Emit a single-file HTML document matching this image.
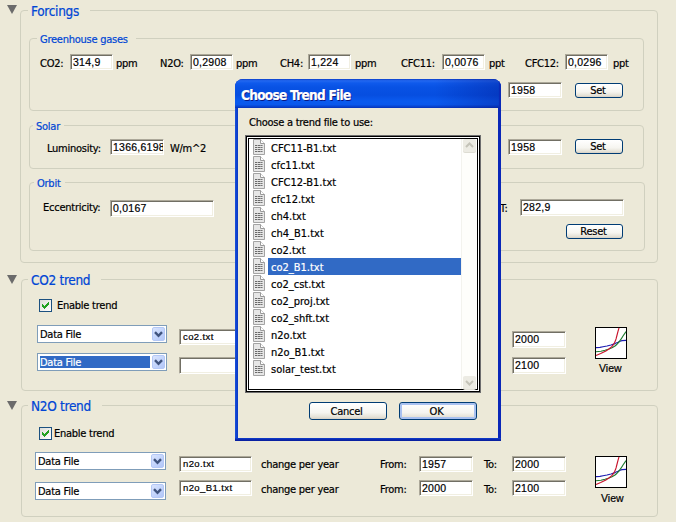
<!DOCTYPE html>
<html><head><meta charset="utf-8"><title>Choose Trend File</title>
<style>
html,body{margin:0;padding:0}
body{width:676px;height:522px;overflow:hidden;background:#ece9d8;position:relative;
 font-family:"DejaVu Sans Condensed","Liberation Sans",sans-serif;font-size:11px;color:#000;letter-spacing:-0.25px;-webkit-text-stroke:0.2px}
.a{position:absolute;white-space:nowrap}
.grp{position:absolute;border:1px solid #d0d0bf;border-radius:4px;box-sizing:border-box}
.gl{position:absolute;background:#ece9d8;color:#0046d5;white-space:nowrap;padding:0 8px 0 3px;line-height:14px;margin-top:1px}
.gl.big{font-size:13.5px;line-height:16px;letter-spacing:-0.3px;padding-right:11px}
.t{position:absolute;white-space:nowrap;line-height:14px;height:14px;margin-top:1px}
.in{position:absolute;box-sizing:border-box;background:#fff;border:1px solid;border-color:#aca899 #fff #fff #aca899;
 box-shadow:inset 1px 1px 0 #716f64, inset -1px -1px 0 #f1efe2;font-family:"Liberation Sans",sans-serif;font-size:10.5px;letter-spacing:0.25px;
 white-space:nowrap;overflow:hidden;padding:0 0 0 2px;line-height:15.5px}
.in.s{padding-left:3px;font-size:9.5px;letter-spacing:0.4px}
.btn{position:absolute;box-sizing:border-box;border:1px solid #003c74;border-radius:3px;text-align:center;
 background:linear-gradient(to bottom,#fff 0,#f6f5f0 60%,#e4e1d6 88%,#d6d0c5 100%);}
.cb{position:absolute;box-sizing:border-box;background:#fff;border:1px solid #7f9db9;height:18px}
.cb .tx{position:absolute;left:2px;top:2px;line-height:13.5px;height:12px;right:16px;padding-left:0}
.cb .ar{position:absolute;right:1px;top:1px;width:13px;height:14px;border-radius:2px;border:1px solid #b4c8f6;box-sizing:border-box;
 background:linear-gradient(135deg,#dae5fe 0,#c4d5fc 50%,#b2c6f7 100%)}
.cb .ar svg{position:absolute;left:1px;top:3px}
.chk{position:absolute;box-sizing:border-box;width:13px;height:13px;border:1px solid #1c5180;
 background:linear-gradient(135deg,#dcdcd7 0,#fff 100%)}
.tri{position:absolute;width:0;height:0;border-left:5px solid transparent;border-right:5px solid transparent;border-top:9px solid #6b6b6b}

.ico{position:absolute;left:595px;width:32px;height:32px;box-sizing:border-box;border:1px solid #000;background:#fff}
.ico svg{position:absolute;left:-1px;top:-1px}
.vw{position:absolute;font-family:"Liberation Sans",sans-serif;font-size:10.5px;letter-spacing:0;line-height:12px;white-space:nowrap}
#dlg{position:absolute;left:235px;top:79px;width:266px;height:362px;box-sizing:border-box;border-radius:8px 8px 0 0;
 background:#0a27b8;overflow:hidden}
#dlg .tb{position:absolute;left:0;top:0;width:266px;height:29px;
 background:linear-gradient(to right,rgba(0,0,110,0) 75%,rgba(0,0,110,0.28) 100%),linear-gradient(to bottom,#0a3cc8 0,#2268f0 6%,#0f5aec 14%,#0852e4 28%,#064ee0 55%,#0a5aee 76%,#0a58ec 88%,#0844d0 95%,#0632b8 100%);box-shadow:inset -3px 0 1px -1px #0a2ab8}
#dlg .lbd{position:absolute;left:0;top:0;width:3px;height:362px;background:linear-gradient(to right,#1c52d8,#0f43d0,#0b38c4)}
#dlg .bbd{position:absolute;left:0;top:359px;width:266px;height:3px;background:linear-gradient(to bottom,#1040cc,#0a28b0,#081c9a)}
#dlg .tt{position:absolute;left:6px;top:8px;color:#fff;font-weight:bold;font-size:13.5px;line-height:16px;letter-spacing:-0.7px;
 text-shadow:1px 1px 0 #0a1883;white-space:nowrap}
#dlg .body{position:absolute;left:3px;top:29px;width:260px;height:330px;background:#ece9d8}
#lb{position:absolute;left:245px;top:135px;width:236px;height:258px;box-sizing:border-box;border:1px solid #6e6e6e;background:#fff;box-shadow:inset 0 0 0 1px #000,inset 0 0 0 2px #fff,inset 0 0 0 3px #000}
.row{position:absolute;left:271px;height:17px;line-height:17px;white-space:nowrap;letter-spacing:0;margin-top:1px}
.sel{position:absolute;left:268px;top:258px;width:193px;height:17px;background:#316ac5}
.fi{position:absolute;left:253px}
.sb{position:absolute;left:461px;top:139px;width:16px;height:250px;background:#fefefb;border-left:1px solid #f3f3ee;box-sizing:border-box}
.sbb{position:absolute;left:463px;width:13px;height:13px;background:#ecebe3;border-radius:2px;box-shadow:0 1px 0 #dddcd2}
</style></head><body>

<!-- group boxes -->
<div class="grp" style="left:20px;top:10px;width:638px;height:253px"></div>
<div class="grp" style="left:29px;top:38px;width:615px;height:73px"></div>
<div class="grp" style="left:29px;top:125px;width:615px;height:44px"></div>
<div class="grp" style="left:29px;top:182px;width:616px;height:69px"></div>
<div class="grp" style="left:21px;top:279px;width:637px;height:112px"></div>
<div class="grp" style="left:21px;top:405px;width:637px;height:112px"></div>

<div class="tri" style="left:7px;top:5px"></div>
<div class="tri" style="left:7px;top:275px"></div>
<div class="tri" style="left:7px;top:401px"></div>

<div class="gl big" style="left:28px;top:2px">Forcings</div>
<div class="gl" style="left:37px;top:32px">Greenhouse gases</div>
<div class="gl" style="left:33px;top:119px;padding-right:4px">Solar</div>
<div class="gl" style="left:34px;top:176px;padding-right:4px">Orbit</div>
<div class="gl big" style="left:28px;top:271px">CO2 trend</div>
<div class="gl big" style="left:28px;top:397px">N2O trend</div>

<!-- greenhouse row -->
<div class="t" style="left:40px;top:56px">CO2:</div>
<div class="in" style="left:70px;top:54px;width:43px;height:16px">314,9</div>
<div class="t" style="left:116px;top:56px">ppm</div>
<div class="t" style="left:160px;top:56px">N2O:</div>
<div class="in" style="left:190px;top:54px;width:43px;height:16px">0,2908</div>
<div class="t" style="left:236px;top:56px">ppm</div>
<div class="t" style="left:280px;top:56px">CH4:</div>
<div class="in" style="left:308px;top:54px;width:43px;height:16px">1,224</div>
<div class="t" style="left:355px;top:56px">ppm</div>
<div class="t" style="left:401px;top:56px">CFC11:</div>
<div class="in" style="left:442px;top:54px;width:43px;height:16px">0,0076</div>
<div class="t" style="left:489px;top:56px">ppt</div>
<div class="t" style="left:525px;top:56px">CFC12:</div>
<div class="in" style="left:565px;top:54px;width:43px;height:16px">0,0296</div>
<div class="t" style="left:613px;top:56px">ppt</div>
<div class="in" style="left:508px;top:82px;width:54px;height:16px">1958</div>
<div class="btn" style="left:575px;top:83px;width:48px;height:15px;line-height:14px;text-indent:-2px">Set</div>

<!-- solar -->
<div class="t" style="left:47px;top:141px">Luminosity:</div>
<div class="in" style="left:110px;top:139px;width:54px;height:16px">1366,6198</div>
<div class="t" style="left:170px;top:141px">W/m^2</div>
<div class="in" style="left:508px;top:139px;width:54px;height:16px">1958</div>
<div class="btn" style="left:575px;top:139px;width:48px;height:15px;line-height:14px;text-indent:-2px">Set</div>

<!-- orbit -->
<div class="t" style="left:43px;top:200px">Eccentricity:</div>
<div class="in" style="left:110px;top:200px;width:104px;height:17px;line-height:15px">0,0167</div>
<div class="t" style="left:500px;top:201px">T:</div>
<div class="in" style="left:520px;top:199px;width:104px;height:17px;line-height:15px">282,9</div>
<div class="btn" style="left:566px;top:224px;width:57px;height:15px;line-height:14px;text-indent:-2px">Reset</div>

<!-- CO2 trend -->
<div class="chk" style="left:39px;top:299px"><svg width="11" height="11" viewBox="0 0 11 11"><path d="M2 4h1v3h-1zM3 5h1v3h-1zM4 6h1v3h-1zM5 5h1v3h-1zM6 4h1v3h-1zM7 3h1v3h-1zM8 2h1v3h-1z" fill="#21a121"/></svg></div>
<div class="t" style="left:57px;top:298px">Enable trend</div>
<div class="cb" style="left:37px;top:325px;width:130px"><div class="tx">Data File</div><div class="ar"><svg width="9" height="7" viewBox="0 0 9 7"><path d="M1 1.2 L4.5 4.8 L8 1.2" fill="none" stroke="#40547e" stroke-width="2.4"/></svg></div></div>
<div class="cb" style="left:37px;top:353px;width:130px"><div class="tx" style="background:#316ac5;color:#fff">Data File</div><div class="ar"><svg width="9" height="7" viewBox="0 0 9 7"><path d="M1 1.2 L4.5 4.8 L8 1.2" fill="none" stroke="#40547e" stroke-width="2.4"/></svg></div></div>
<div class="in s" style="left:179px;top:329px;width:73px;height:16px;line-height:13.5px">co2.txt</div>
<div class="in s" style="left:179px;top:357px;width:73px;height:17px;line-height:13.5px"></div>
<div class="in" style="left:512px;top:331px;width:54px;height:17px;line-height:15px">2000</div>
<div class="in" style="left:512px;top:357px;width:54px;height:17px;line-height:15px">2100</div>

<!-- N2O trend -->
<div class="chk" style="left:39px;top:427px"><svg width="11" height="11" viewBox="0 0 11 11"><path d="M2 4h1v3h-1zM3 5h1v3h-1zM4 6h1v3h-1zM5 5h1v3h-1zM6 4h1v3h-1zM7 3h1v3h-1zM8 2h1v3h-1z" fill="#21a121"/></svg></div>
<div class="t" style="left:54px;top:426px">Enable trend</div>
<div class="cb" style="left:35px;top:452px;width:131px"><div class="tx">Data File</div><div class="ar"><svg width="9" height="7" viewBox="0 0 9 7"><path d="M1 1.2 L4.5 4.8 L8 1.2" fill="none" stroke="#40547e" stroke-width="2.4"/></svg></div></div>
<div class="cb" style="left:35px;top:482px;width:131px"><div class="tx">Data File</div><div class="ar"><svg width="9" height="7" viewBox="0 0 9 7"><path d="M1 1.2 L4.5 4.8 L8 1.2" fill="none" stroke="#40547e" stroke-width="2.4"/></svg></div></div>
<div class="in s" style="left:179px;top:456px;width:73px;height:16px;line-height:13.5px">n2o.txt</div>
<div class="in s" style="left:179px;top:480px;width:73px;height:16px;line-height:13.5px">n2o_B1.txt</div>
<div class="t" style="left:261px;top:457px">change per year</div>
<div class="t" style="left:261px;top:482px">change per year</div>
<div class="t" style="left:380px;top:457px">From:</div>
<div class="t" style="left:380px;top:482px">From:</div>
<div class="in" style="left:419px;top:456px;width:54px;height:16px">1957</div>
<div class="in" style="left:419px;top:480px;width:54px;height:16px">2000</div>
<div class="t" style="left:484px;top:457px">To:</div>
<div class="t" style="left:484px;top:482px">To:</div>
<div class="in" style="left:512px;top:456px;width:54px;height:16px">2000</div>
<div class="in" style="left:512px;top:480px;width:54px;height:16px">2100</div>


<div class="ico" style="top:327px"><svg width="32" height="32" viewBox="0 0 32 32" fill="none" stroke-width="1.15" stroke-linejoin="round">
<polyline points="1,20.6 5,20.4 8,19.8 12,19 16,18 20,16.6 23,15.2 25,14.2 27,13.6 31,13.4" stroke="#1c1cb0"/>
<polyline points="1,24.8 6,24.3 10,23.2 14,22 17,20.8 20,19 22,17.2 24,15 26,12.2 28,9 31,4.6" stroke="#1e7a2e"/>
<polyline points="1,28.5 5.7,26.4 10.9,23.9 13.5,22.3 15.5,20.8 17,19.3 18.4,17.6 19.5,15.8 20.5,13.6 21.2,11.4 21.8,9 23,4.4 24,0.8" stroke="#c8142c"/>
</svg></div>
<div class="vw" style="left:599px;top:362px">View</div>
<div class="ico" style="top:456px"><svg width="32" height="32" viewBox="0 0 32 32" fill="none" stroke-width="1.15" stroke-linejoin="round">
<polyline points="1,20.6 5,20.4 8,19.8 12,19 16,18 20,16.6 23,15.2 25,14.2 27,13.6 31,13.4" stroke="#1c1cb0"/>
<polyline points="1,24.8 6,24.3 10,23.2 14,22 17,20.8 20,19 22,17.2 24,15 26,12.2 28,9 31,4.6" stroke="#1e7a2e"/>
<polyline points="1,28.5 5.7,26.4 10.9,23.9 13.5,22.3 15.5,20.8 17,19.3 18.4,17.6 19.5,15.8 20.5,13.6 21.2,11.4 21.8,9 23,4.4 24,0.8" stroke="#c8142c"/>
</svg></div>
<div class="vw" style="left:601px;top:492px">View</div>

<!-- dialog -->
<div id="dlg"><div class="lbd"></div><div class="bbd"></div><div class="tb"></div><div class="tt">Choose Trend File</div><div class="body"></div></div>
<div class="t" style="left:249px;top:115px">Choose a trend file to use:</div>
<div id="lb"></div>
<div class="sb"></div>
<div class="sbb" style="top:139px"><svg width="13" height="13" viewBox="0 0 13 13"><path d="M3 8 L6.5 4.5 L10 8" fill="none" stroke="#c4c3b8" stroke-width="2"/></svg></div>
<div class="sbb" style="top:376px"><svg width="13" height="13" viewBox="0 0 13 13"><path d="M3 5 L6.5 8.5 L10 5" fill="none" stroke="#c4c3b8" stroke-width="2"/></svg></div>
<div class="sel"></div>
<div class="fi" style="top:139px"><svg width="12" height="16" viewBox="0 0 12 16"><path d="M0.5 0.5 H7.5 L11.5 4.5 V15.5 H0.5 Z" fill="#e6e6e6" stroke="#a3a3a3"/><path d="M7.5 0.5 V4.5 H11.5" fill="#fff" stroke="#9a9a9a"/><path d="M2 6.5 H9.5 M2 8.5 H9.5 M2 10.5 H9.5 M2 12.5 H9.5" stroke="#6a6a6a" stroke-dasharray="2 0.6 3 0.5 1.5 0.4"/></svg></div><div class="row" style="top:139px">CFC11-B1.txt</div>
<div class="fi" style="top:156px"><svg width="12" height="16" viewBox="0 0 12 16"><path d="M0.5 0.5 H7.5 L11.5 4.5 V15.5 H0.5 Z" fill="#e6e6e6" stroke="#a3a3a3"/><path d="M7.5 0.5 V4.5 H11.5" fill="#fff" stroke="#9a9a9a"/><path d="M2 6.5 H9.5 M2 8.5 H9.5 M2 10.5 H9.5 M2 12.5 H9.5" stroke="#6a6a6a" stroke-dasharray="2 0.6 3 0.5 1.5 0.4"/></svg></div><div class="row" style="top:156px">cfc11.txt</div>
<div class="fi" style="top:173px"><svg width="12" height="16" viewBox="0 0 12 16"><path d="M0.5 0.5 H7.5 L11.5 4.5 V15.5 H0.5 Z" fill="#e6e6e6" stroke="#a3a3a3"/><path d="M7.5 0.5 V4.5 H11.5" fill="#fff" stroke="#9a9a9a"/><path d="M2 6.5 H9.5 M2 8.5 H9.5 M2 10.5 H9.5 M2 12.5 H9.5" stroke="#6a6a6a" stroke-dasharray="2 0.6 3 0.5 1.5 0.4"/></svg></div><div class="row" style="top:173px">CFC12-B1.txt</div>
<div class="fi" style="top:190px"><svg width="12" height="16" viewBox="0 0 12 16"><path d="M0.5 0.5 H7.5 L11.5 4.5 V15.5 H0.5 Z" fill="#e6e6e6" stroke="#a3a3a3"/><path d="M7.5 0.5 V4.5 H11.5" fill="#fff" stroke="#9a9a9a"/><path d="M2 6.5 H9.5 M2 8.5 H9.5 M2 10.5 H9.5 M2 12.5 H9.5" stroke="#6a6a6a" stroke-dasharray="2 0.6 3 0.5 1.5 0.4"/></svg></div><div class="row" style="top:190px">cfc12.txt</div>
<div class="fi" style="top:207px"><svg width="12" height="16" viewBox="0 0 12 16"><path d="M0.5 0.5 H7.5 L11.5 4.5 V15.5 H0.5 Z" fill="#e6e6e6" stroke="#a3a3a3"/><path d="M7.5 0.5 V4.5 H11.5" fill="#fff" stroke="#9a9a9a"/><path d="M2 6.5 H9.5 M2 8.5 H9.5 M2 10.5 H9.5 M2 12.5 H9.5" stroke="#6a6a6a" stroke-dasharray="2 0.6 3 0.5 1.5 0.4"/></svg></div><div class="row" style="top:207px">ch4.txt</div>
<div class="fi" style="top:224px"><svg width="12" height="16" viewBox="0 0 12 16"><path d="M0.5 0.5 H7.5 L11.5 4.5 V15.5 H0.5 Z" fill="#e6e6e6" stroke="#a3a3a3"/><path d="M7.5 0.5 V4.5 H11.5" fill="#fff" stroke="#9a9a9a"/><path d="M2 6.5 H9.5 M2 8.5 H9.5 M2 10.5 H9.5 M2 12.5 H9.5" stroke="#6a6a6a" stroke-dasharray="2 0.6 3 0.5 1.5 0.4"/></svg></div><div class="row" style="top:224px">ch4_B1.txt</div>
<div class="fi" style="top:241px"><svg width="12" height="16" viewBox="0 0 12 16"><path d="M0.5 0.5 H7.5 L11.5 4.5 V15.5 H0.5 Z" fill="#e6e6e6" stroke="#a3a3a3"/><path d="M7.5 0.5 V4.5 H11.5" fill="#fff" stroke="#9a9a9a"/><path d="M2 6.5 H9.5 M2 8.5 H9.5 M2 10.5 H9.5 M2 12.5 H9.5" stroke="#6a6a6a" stroke-dasharray="2 0.6 3 0.5 1.5 0.4"/></svg></div><div class="row" style="top:241px">co2.txt</div>
<div class="fi" style="top:258px"><svg width="12" height="16" viewBox="0 0 12 16"><path d="M0.5 0.5 H7.5 L11.5 4.5 V15.5 H0.5 Z" fill="#e6e6e6" stroke="#a3a3a3"/><path d="M7.5 0.5 V4.5 H11.5" fill="#fff" stroke="#9a9a9a"/><path d="M2 6.5 H9.5 M2 8.5 H9.5 M2 10.5 H9.5 M2 12.5 H9.5" stroke="#6a6a6a" stroke-dasharray="2 0.6 3 0.5 1.5 0.4"/></svg></div><div class="row" style="top:258px;color:#fff">co2_B1.txt</div>
<div class="fi" style="top:275px"><svg width="12" height="16" viewBox="0 0 12 16"><path d="M0.5 0.5 H7.5 L11.5 4.5 V15.5 H0.5 Z" fill="#e6e6e6" stroke="#a3a3a3"/><path d="M7.5 0.5 V4.5 H11.5" fill="#fff" stroke="#9a9a9a"/><path d="M2 6.5 H9.5 M2 8.5 H9.5 M2 10.5 H9.5 M2 12.5 H9.5" stroke="#6a6a6a" stroke-dasharray="2 0.6 3 0.5 1.5 0.4"/></svg></div><div class="row" style="top:275px">co2_cst.txt</div>
<div class="fi" style="top:292px"><svg width="12" height="16" viewBox="0 0 12 16"><path d="M0.5 0.5 H7.5 L11.5 4.5 V15.5 H0.5 Z" fill="#e6e6e6" stroke="#a3a3a3"/><path d="M7.5 0.5 V4.5 H11.5" fill="#fff" stroke="#9a9a9a"/><path d="M2 6.5 H9.5 M2 8.5 H9.5 M2 10.5 H9.5 M2 12.5 H9.5" stroke="#6a6a6a" stroke-dasharray="2 0.6 3 0.5 1.5 0.4"/></svg></div><div class="row" style="top:292px">co2_proj.txt</div>
<div class="fi" style="top:309px"><svg width="12" height="16" viewBox="0 0 12 16"><path d="M0.5 0.5 H7.5 L11.5 4.5 V15.5 H0.5 Z" fill="#e6e6e6" stroke="#a3a3a3"/><path d="M7.5 0.5 V4.5 H11.5" fill="#fff" stroke="#9a9a9a"/><path d="M2 6.5 H9.5 M2 8.5 H9.5 M2 10.5 H9.5 M2 12.5 H9.5" stroke="#6a6a6a" stroke-dasharray="2 0.6 3 0.5 1.5 0.4"/></svg></div><div class="row" style="top:309px">co2_shft.txt</div>
<div class="fi" style="top:326px"><svg width="12" height="16" viewBox="0 0 12 16"><path d="M0.5 0.5 H7.5 L11.5 4.5 V15.5 H0.5 Z" fill="#e6e6e6" stroke="#a3a3a3"/><path d="M7.5 0.5 V4.5 H11.5" fill="#fff" stroke="#9a9a9a"/><path d="M2 6.5 H9.5 M2 8.5 H9.5 M2 10.5 H9.5 M2 12.5 H9.5" stroke="#6a6a6a" stroke-dasharray="2 0.6 3 0.5 1.5 0.4"/></svg></div><div class="row" style="top:326px">n2o.txt</div>
<div class="fi" style="top:343px"><svg width="12" height="16" viewBox="0 0 12 16"><path d="M0.5 0.5 H7.5 L11.5 4.5 V15.5 H0.5 Z" fill="#e6e6e6" stroke="#a3a3a3"/><path d="M7.5 0.5 V4.5 H11.5" fill="#fff" stroke="#9a9a9a"/><path d="M2 6.5 H9.5 M2 8.5 H9.5 M2 10.5 H9.5 M2 12.5 H9.5" stroke="#6a6a6a" stroke-dasharray="2 0.6 3 0.5 1.5 0.4"/></svg></div><div class="row" style="top:343px">n2o_B1.txt</div>
<div class="fi" style="top:360px"><svg width="12" height="16" viewBox="0 0 12 16"><path d="M0.5 0.5 H7.5 L11.5 4.5 V15.5 H0.5 Z" fill="#e6e6e6" stroke="#a3a3a3"/><path d="M7.5 0.5 V4.5 H11.5" fill="#fff" stroke="#9a9a9a"/><path d="M2 6.5 H9.5 M2 8.5 H9.5 M2 10.5 H9.5 M2 12.5 H9.5" stroke="#6a6a6a" stroke-dasharray="2 0.6 3 0.5 1.5 0.4"/></svg></div><div class="row" style="top:360px">solar_test.txt</div>

<div class="btn" style="left:309px;top:402px;width:78px;height:18px;line-height:17px;text-indent:-3px">Cancel</div>
<div class="btn" style="left:399px;top:402px;width:78px;height:18px;line-height:17px;text-indent:-3px;box-shadow:inset 0 0 0 2px #a9c1f0">OK</div>
</body></html>
